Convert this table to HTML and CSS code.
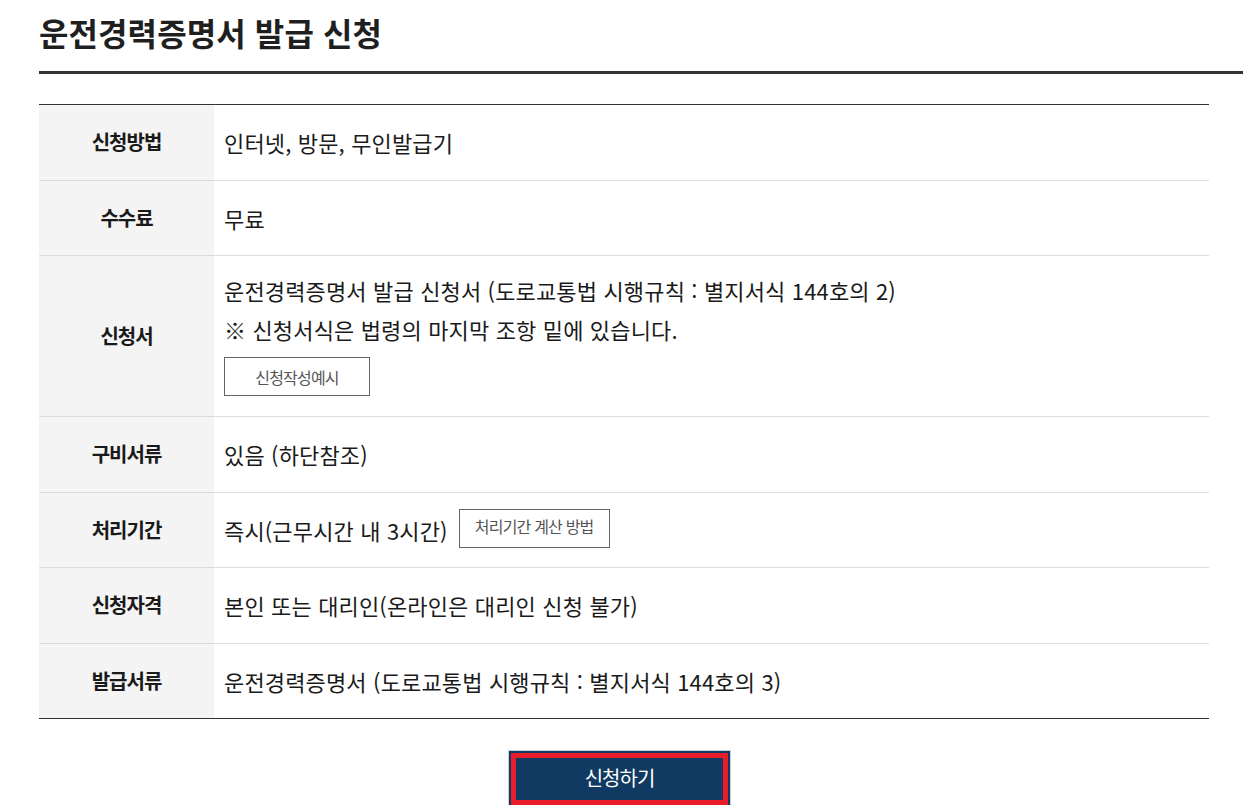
FILE: index.html
```html
<!DOCTYPE html>
<html lang="ko">
<head>
<meta charset="utf-8">
<title>운전경력증명서 발급 신청</title>
<link rel="stylesheet" href="styles.css">
</head>
<body>
<div class="page">
  <h2 class="title">운전경력증명서 발급 신청</h2>
  <div class="title-line"></div>
  <table class="info">
    <tbody>
      <tr>
        <th>신청방법</th>
        <td>인터넷, 방문, 무인발급기</td>
      </tr>
      <tr>
        <th>수수료</th>
        <td>무료</td>
      </tr>
      <tr>
        <th>신청서</th>
        <td class="multi">
          <p class="line">운전경력증명서 발급 신청서 (도로교통법 시행규칙 : 별지서식 144호의 2)</p>
          <p class="line">※ 신청서식은 법령의 마지막 조항 밑에 있습니다.</p>
          <button class="sub-btn wide" type="button">신청작성예시</button>
        </td>
      </tr>
      <tr>
        <th>구비서류</th>
        <td>있음 (하단참조)</td>
      </tr>
      <tr>
        <th>처리기간</th>
        <td><div class="inline-row"><span>즉시(근무시간 내 3시간)</span><button class="sub-btn" type="button">처리기간 계산 방법</button></div></td>
      </tr>
      <tr>
        <th>신청자격</th>
        <td>본인 또는 대리인(온라인은 대리인 신청 불가)</td>
      </tr>
      <tr class="last">
        <th>발급서류</th>
        <td>운전경력증명서 (도로교통법 시행규칙 : 별지서식 144호의 3)</td>
      </tr>
    </tbody>
  </table>
  <div class="actions">
    <button class="apply-btn" type="button">신청하기</button>
  </div>
</div>
</body>
</html>
```
FILE: styles.css
```css
html, body {
  margin: 0;
  padding: 0;
  background: #fff;
}
body {
  font-family: "Noto Sans CJK KR", "Noto Sans", sans-serif;
  color: #222;
}
.page {
  padding-left: 39px;
}
.title {
  margin: 0;
  padding-top: 9px;
  height: 71px;
  box-sizing: border-box;
  font-size: 32px;
  line-height: 46px;
  font-weight: 700;
  letter-spacing: 0.1px;
  color: #1f1f1f;
}
.title-line {
  height: 3px;
  background: #333;
}
.info {
  margin-top: 30px;
  width: 1170px;
  border-collapse: collapse;
  border-top: 1px solid #333;
  border-bottom: 1px solid #333;
}
.info th,
.info td {
  border-bottom: 1px solid #ddd;
  padding: 18px 10px 18.5px;
  line-height: 38px;
  vertical-align: middle;
  text-align: left;
}
.info .last th,
.info .last td {
  border-bottom-color: #333;
}
.info th {
  width: 155px;
  background: #f4f4f4;
  text-align: center;
  font-size: 20px;
  font-weight: 700;
  letter-spacing: -1px;
  color: #1a1a1a;
}
.info td {
  font-size: 22px;
  letter-spacing: 0.15px;
  color: #1a1a1a;
}
.info td.multi {
  padding-top: 15px;
  padding-bottom: 20px;
  line-height: 39px;
}
.line {
  margin: 0;
}
.sub-btn {
  font-family: inherit;
  font-size: 16px;
  letter-spacing: -0.8px;
  color: #555;
  background: #fff;
  border: 1px solid #666;
  padding: 0;
  line-height: 20px;
  cursor: pointer;
}
.sub-btn.wide {
  display: block;
  width: 146px;
  height: 39px;
  margin-top: 8px;
}
.inline-row {
  display: flex;
  align-items: center;
  gap: 11px;
}
.inline-row .sub-btn {
  width: 151px;
  height: 39px;
  padding-bottom: 6px;
  margin-top: -2px;
}
.actions {
  display: flex;
  padding-left: 469px;
  padding-top: 31px;
}
.apply-btn {
  width: 223px;
  height: 58px;
  font-family: inherit;
  font-size: 20px;
  letter-spacing: -1px;
  color: #fff;
  background: #103a61;
  border: 1px solid #c8d0d8;
  box-shadow: inset 0 0 0 2px #103a61, inset 0 0 0 7px #e91c2a;
  padding: 0 0 4px;
  cursor: pointer;
}
```
